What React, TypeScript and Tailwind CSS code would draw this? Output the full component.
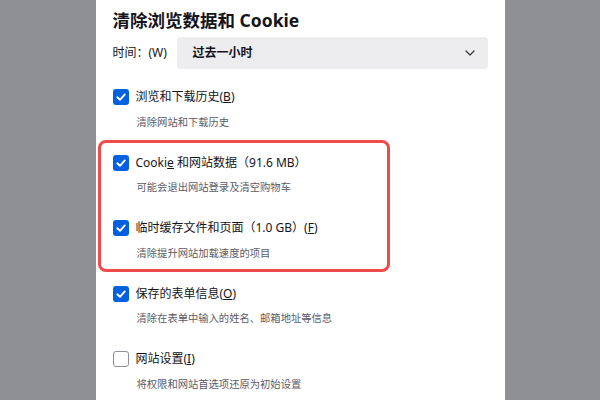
const font = "font-['Noto_Sans','Noto_Sans_CJK_SC',sans-serif]";

type Item = {
  label: React.ReactNode;
  desc: string;
  checked: boolean;
};

const CheckBox = ({ checked }: { checked: boolean }) =>
  checked ? (
    <span className="flex h-4 w-4 shrink-0 items-center justify-center rounded-[3px] bg-[#0061e0]">
      <svg width="12" height="12" viewBox="0 0 12 12" fill="none">
        <path d="M2.3 6.3 L5 8.8 L9.8 3.4" stroke="white" strokeWidth="1.9" strokeLinecap="round" strokeLinejoin="round" />
      </svg>
    </span>
  ) : (
    <span className="h-4 w-4 shrink-0 rounded-[3px] border border-[#8f8f9d] bg-white" />
  );

const items: Item[] = [
  {
    label: (
      <>
        浏览和下载历史(<u>B</u>)
      </>
    ),
    desc: "清除网站和下载历史",
    checked: true,
  },
  {
    label: (
      <>
        Cooki<u>e</u> 和网站数据（91.6 MB）
      </>
    ),
    desc: "可能会退出网站登录及清空购物车",
    checked: true,
  },
  {
    label: (
      <>
        临时缓存文件和页面（1.0 GB）(<u>F</u>)
      </>
    ),
    desc: "清除提升网站加载速度的项目",
    checked: true,
  },
  {
    label: (
      <>
        保存的表单信息(<u>O</u>)
      </>
    ),
    desc: "清除在表单中输入的姓名、邮箱地址等信息",
    checked: true,
  },
  {
    label: (
      <>
        网站设置(<u>I</u>)
      </>
    ),
    desc: "将权限和网站首选项还原为初始设置",
    checked: false,
  },
];

export default function App() {
  return (
    <div className={`flex h-[400px] w-[600px] justify-center overflow-hidden bg-[#8f8f96] ${font}`}>
      <div className="relative h-full w-[409px] bg-white px-[17px] text-[#15141a]">
        <h1 className="pt-[8px] text-[17.5px] font-bold leading-[24px]">清除浏览数据和 Cookie</h1>

        <div className="mt-[5px] flex h-[32px] items-center gap-[4px]">
          <span className="w-[60px] text-[12px]">时间：(W)</span>
          <div className="flex h-full flex-1 items-center justify-between rounded-[4px] bg-[#ededf0] pl-[16px] pr-[13px]">
            <span className="text-[12px] font-bold">过去一小时</span>
            <svg width="10" height="6" viewBox="0 0 10 6" fill="none">
              <path d="M1 1 L5 5 L9 1" stroke="#3a3944" strokeWidth="1.3" strokeLinecap="round" strokeLinejoin="round" />
            </svg>
          </div>
        </div>

        <div className="mt-[18px] flex flex-col gap-[23px]">
          {items.map((item, i) => (
            <div key={i} className="flex flex-col">
              <label className="flex h-[20px] items-center gap-[7px] text-[12px] leading-[20px]">
                <CheckBox checked={item.checked} />
                <span>{item.label}</span>
              </label>
              <p className="mt-[6.5px] pl-[24px] text-[10.3px] leading-[16px] text-[#5b5b66]">{item.desc}</p>
            </div>
          ))}
        </div>

        {/* highlight annotation */}
        <div className="pointer-events-none absolute left-[2px] top-[140px] h-[132px] w-[292px] rounded-[8px] border-[3.5px] border-[#f04b4b]" />
      </div>
    </div>
  );
}
